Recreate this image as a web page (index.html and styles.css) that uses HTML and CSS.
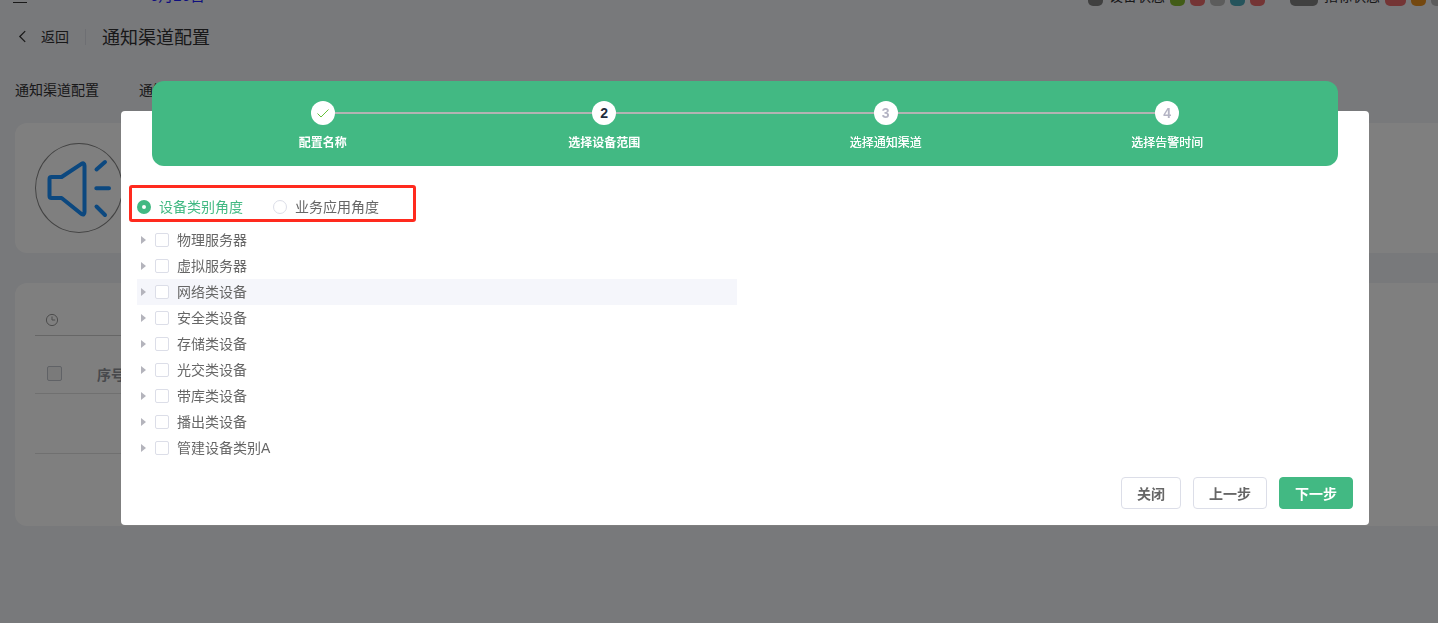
FILE: index.html
```html
<!DOCTYPE html>
<html lang="zh-CN">
<head>
<meta charset="utf-8">
<title>通知渠道配置</title>
<link rel="stylesheet" href="styles.css">
</head>
<body>
<div class="page">
  <div class="topbar">
    <span class="menu-line"></span>
    <span class="date">6月26日</span>
    <div class="status">
      <span class="pill dark w15">8</span><span class="status-label">设备状态</span>
      <span class="pill green w15">1</span><span class="pill red w15">1</span><span class="pill gray w15">1</span><span class="pill teal w15">1</span><span class="pill red w15">1</span>
      <span class="pill dark w28 gap-l">123</span><span class="status-label">指标状态</span>
      <span class="pill red w21">11</span><span class="pill orange w15">1</span><span class="pill gray w15">1</span>
    </div>
  </div>
  <div class="backbar">
    <svg class="chevron" viewBox="0 0 10 16"><path d="M8 2 2 8l6 6" fill="none" stroke="#333" stroke-width="1.4"/></svg>
    <span class="back-text">返回</span>
    <span class="divider"></span>
    <span class="title">通知渠道配置</span>
  </div>
  <div class="tabs"><span>通知渠道配置</span><span>通知渠道日志</span></div>
  <section class="card hero">
    <div class="speaker">
      <svg viewBox="0 0 88 90" width="88" height="90"><g fill="none" stroke="#1890ff" stroke-width="4" stroke-linecap="round" stroke-linejoin="round"><path d="M14.5 36q0-2 2-2H26.6L46.5 20.8q3-1.5 3 2V69q0 3.5-3 2L26.6 55H16.5q-2 0-2-2z"/><path d="M61.5 26.5 70 19M61.3 45.3H74M61.5 63.5 70 72"/></g></svg>
    </div>
  </section>
  <section class="card list">
    <svg class="clock" viewBox="0 0 14 14"><circle cx="7" cy="7" r="5.6" fill="none" stroke="#999" stroke-width="1"/><path d="M7 3.5V7h3.2" fill="none" stroke="#999" stroke-width="1"/></svg>
    <div class="thead"><span class="th-check"></span><span class="th-text">序号</span></div>
    <div class="tr-empty"></div>
  </section>
</div>

<div class="overlay">
  <div class="modal">
    <div class="steps">
      <div class="step done"><span class="dot"><svg viewBox="0 0 14 14" width="14" height="14"><path d="M1.5 7.5 5 11l7.5-7.5" fill="none" stroke="#67c23a" stroke-width="1"/></svg></span><span class="step-label">配置名称</span></div>
      <div class="step active"><span class="dot">2</span><span class="step-label">选择设备范围</span></div>
      <div class="step"><span class="dot">3</span><span class="step-label">选择通知渠道</span></div>
      <div class="step last"><span class="dot">4</span><span class="step-label">选择告警时间</span></div>
    </div>
    <div class="radios">
      <span class="radio on"><i></i>设备类别角度</span>
      <span class="radio"><i></i>业务应用角度</span>
    </div>
    <span class="mark"></span>
    <ul class="tree">
      <li><i class="caret"></i><i class="box"></i><span class="node">物理服务器</span></li>
      <li><i class="caret"></i><i class="box"></i><span class="node">虚拟服务器</span></li>
      <li class="hover"><i class="caret"></i><i class="box"></i><span class="node">网络类设备</span></li>
      <li><i class="caret"></i><i class="box"></i><span class="node">安全类设备</span></li>
      <li><i class="caret"></i><i class="box"></i><span class="node">存储类设备</span></li>
      <li><i class="caret"></i><i class="box"></i><span class="node">光交类设备</span></li>
      <li><i class="caret"></i><i class="box"></i><span class="node">带库类设备</span></li>
      <li><i class="caret"></i><i class="box"></i><span class="node">播出类设备</span></li>
      <li><i class="caret"></i><i class="box"></i><span class="node">管建设备类别A</span></li>
    </ul>
    <div class="footer">
      <button class="btn b-close">关闭</button>
      <button class="btn b-step">上一步</button>
      <button class="btn b-step primary">下一步</button>
    </div>
  </div>
</div>
</body>
</html>
```
FILE: styles.css
```css
* { box-sizing: border-box; }
html, body { margin: 0; height: 623px; overflow: hidden; }
body {
  background: #f0f2f6;
  color: #303133;
  font-family: "Liberation Sans", "Noto Sans CJK SC", sans-serif;
  font-size: 14px;
}
i { display: block; font-style: normal; }

.page { height: 623px; overflow: hidden; }

.topbar {
  height: 8px;
  display: flex;
  align-items: flex-end;
  overflow: hidden;
  line-height: 16px;
}
.menu-line { width: 14px; height: 1px; background: #333; margin: 0 0 5px 13px; }
.date { margin: 0 0 4px 123px; color: #1f1fff; font-size: 15px; }
.status { margin-left: auto; display: flex; align-items: flex-end; width: 350px; flex: none; font-size: 14px; }
.pill {
  height: 20px;
  border-radius: 5px;
  margin: 0 5px 2px 0;
  color: #fff;
  font-size: 12px;
  line-height: 18px;
  text-align: center;
  flex: none;
}
.w15 { width: 15px; }
.w21 { width: 21px; }
.w28 { width: 28px; }
.gap-l { margin-left: 20px; }
.dark { background: #808080; }
.green { background: #84b82e; }
.red { background: #e86a6a; }
.gray { background: #b8b8b8; }
.teal { background: #4aa8b8; }
.orange { background: #e89020; }
.status-label { color: #303133; margin: 0 5px 4px 1px; width: 56px; flex: none; }

.backbar { height: 55px; display: flex; align-items: center; padding: 0 0 0 18px; }
.chevron { width: 9px; height: 15px; margin: 2px 14px 0 0; }
.back-text { color: #303133; font-size: 14px; }
.divider { width: 1px; height: 16px; background: #dcdfe6; margin: 2px 16px 0; }
.title { font-size: 18px; color: #303133; }

.tabs { display: flex; gap: 40px; padding-left: 15px; height: 60px; padding-top: 19px; line-height: 16px; }

.card { background: #fff; margin-left: 15px; border-radius: 12px 0 0 12px; }
.hero { height: 130px; padding: 20px; }
.speaker { width: 88px; height: 90px; border: 1px solid #888; border-radius: 50%; display: flex; align-items: center; justify-content: center; }
.speaker svg { flex: none; }

.list { height: 243px; margin-top: 30px; padding: 30px 20px 0; }
.clock { display: block; width: 14px; height: 14px; margin-left: 10px; }
.thead { margin-top: 8px; height: 59px; padding: 18px 0 0 12px; border-top: 1px solid #ccc; border-bottom: 1px solid #e0e0e0; display: flex; align-items: center; width: 1200px; }
.th-check { width: 15px; height: 15px; border: 1px solid #c0c4cc; border-radius: 2px; background: #f4f4f4; }
.th-text { margin-left: 35px; font-weight: bold; color: #909399; }
.tr-empty { height: 60px; border-bottom: 1px solid #e0e0e0; width: 1200px; }

.overlay {
  position: fixed;
  inset: 0;
  background: rgba(0, 0, 0, .5);
  padding: 111px 69px 0 121px;
}
.modal {
  position: relative;
  display: flex;
  flex-direction: column;
  background: #fff;
  border-radius: 4px;
  height: 414px;
  padding: 0 16px 16px;
  color: #666;
}

.steps {
  flex: none;
  height: 85px;
  margin: -30px 15px 0;
  padding: 20px 30px 0;
  background: #42b983;
  border-radius: 12px;
  display: grid;
  grid-template-columns: repeat(4, 1fr);
}
.step { position: relative; display: flex; flex-direction: column; align-items: center; }
.step::after {
  content: "";
  position: absolute;
  top: 11px;
  left: 50%;
  width: 100%;
  height: 2px;
  background: #b3b3b3;
}
.step.last::after { display: none; }
.dot {
  position: relative;
  z-index: 1;
  width: 24px;
  height: 24px;
  border-radius: 50%;
  background: #fff;
  color: #b4b4c4;
  font-size: 14px;
  font-weight: bold;
  display: flex;
  align-items: center;
  justify-content: center;
}
.active .dot { color: #1f2d3d; }
.step-label { margin-top: 10px; color: #fff; font-size: 12px; line-height: 17px; text-shadow: 0 0 .5px #fff; }
.done .step-label, .active .step-label { font-weight: bold; text-shadow: none; }

.radios { display: flex; flex: none; height: 20px; margin-top: 31px; align-items: center; gap: 30px; line-height: 20px; }
.radio { display: flex; align-items: center; color: #666; }
.radio i { width: 14px; height: 14px; border-radius: 50%; border: 1px solid #dcdee8; margin-right: 8px; }
.radio.on { color: #42b983; }
.radio.on i { border: 5px solid #42b983; background: #fff; }
.mark {
  position: absolute;
  left: 8px;
  top: 74px;
  width: 287px;
  height: 37px;
  border: 3px solid #ff2a1e;
  border-radius: 3px;
}

.tree { list-style: none; margin: 10px 0 0; padding: 0; width: 600px; flex: none; }
.tree li { height: 26px; display: flex; align-items: center; padding-left: 4px; color: #666; }
.tree li.hover { background: #f5f6fb; }
.caret { width: 0; height: 0; border-left: 5px solid #b4b4bc; border-top: 4px solid transparent; border-bottom: 4px solid transparent; margin-right: 9px; }
.box { width: 14px; height: 14px; border: 1px solid #dcdee8; border-radius: 2px; margin: 0 8px 0 0; background: #fff; }
.node { margin-top: -2px; }

.footer { display: flex; justify-content: flex-end; gap: 12px; margin-top: 16px; }
.btn {
  height: 32px;
  border: 1px solid #dcdee8;
  border-radius: 4px;
  background: #fff;
  color: #666;
  font: bold 14px "Liberation Sans", "Noto Sans CJK SC", sans-serif;
  padding: 0;
}
.b-close { width: 60px; }
.b-step { width: 74px; }
.primary { background: #42b983; border-color: #42b983; color: #fff; }
```
